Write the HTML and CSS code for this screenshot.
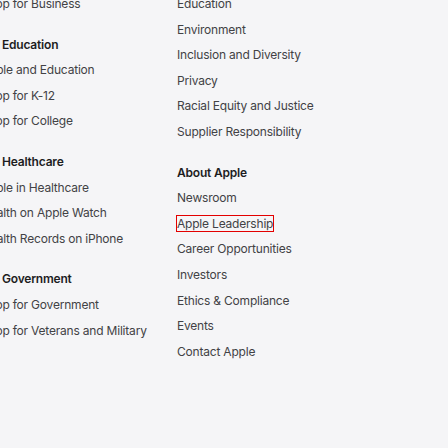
FILE: index.html
```html
<!DOCTYPE html>
<html lang="en">
<head>
<meta charset="utf-8">
<title>Apple Footer Directory</title>
<link rel="stylesheet" href="styles.css">
</head>
<body>
<nav class="directory">
  <div class="column">
    <section class="section">
      <ul class="list">
        <li class="item"><a class="link" href="#">Shop for Business</a></li>
      </ul>
    </section>
    <section class="section">
      <h3 class="title">For Education</h3>
      <ul class="list">
        <li class="item"><a class="link" href="#">Apple and Education</a></li>
        <li class="item"><a class="link" href="#">Shop for K-12</a></li>
        <li class="item"><a class="link" href="#">Shop for College</a></li>
      </ul>
    </section>
    <section class="section">
      <h3 class="title">For Healthcare</h3>
      <ul class="list">
        <li class="item"><a class="link" href="#">Apple in Healthcare</a></li>
        <li class="item"><a class="link" href="#">Health on Apple Watch</a></li>
        <li class="item"><a class="link" href="#">Health Records on iPhone</a></li>
      </ul>
    </section>
    <section class="section">
      <h3 class="title">For Government</h3>
      <ul class="list">
        <li class="item"><a class="link" href="#">Shop for Government</a></li>
        <li class="item"><a class="link" href="#">Shop for Veterans and Military</a></li>
      </ul>
    </section>
  </div>
  <div class="column">
    <section class="section">
      <ul class="list">
        <li class="item"><a class="link" href="#">Education</a></li>
        <li class="item"><a class="link" href="#">Environment</a></li>
        <li class="item"><a class="link" href="#">Inclusion and Diversity</a></li>
        <li class="item"><a class="link" href="#">Privacy</a></li>
        <li class="item"><a class="link" href="#">Racial Equity and Justice</a></li>
        <li class="item"><a class="link" href="#">Supplier Responsibility</a></li>
      </ul>
    </section>
    <section class="section">
      <h3 class="title">About Apple</h3>
      <ul class="list">
        <li class="item"><a class="link" href="#">Newsroom</a></li>
        <li class="item"><a class="link focused" href="#">Apple Leadership</a></li>
        <li class="item"><a class="link" href="#">Career Opportunities</a></li>
        <li class="item"><a class="link" href="#">Investors</a></li>
        <li class="item"><a class="link" href="#">Ethics &amp; Compliance</a></li>
        <li class="item"><a class="link" href="#">Events</a></li>
        <li class="item"><a class="link" href="#">Contact Apple</a></li>
      </ul>
    </section>
  </div>
</nav>
</body>
</html>
```

FILE: styles.css
```css
html, body {
  margin: 0;
  padding: 0;
  background: #f5f5f7;
  height: 100%;
  overflow: hidden;
}

body {
  font-family: Inter, "Noto Sans", "Liberation Sans", sans-serif;
  font-size: 12px;
  line-height: 16px;
  letter-spacing: -0.2px;
  color: #424245;
}

.directory {
  display: grid;
  grid-template-columns: 196px 200px;
  margin-top: -4px;
  margin-left: -19px;
}

.section {
  padding-bottom: 15px;
}

.title {
  margin: 0 0 9.6px;
  font-size: 12px;
  line-height: 16px;
  font-weight: 600;
  color: #1d1d1f;
}

.list {
  list-style: none;
  margin: 0;
  padding: 0;
}

.item {
  margin: 0 0 9.6px;
  white-space: nowrap;
}

.link {
  color: #424245;
  text-decoration: none;
}

.focused {
  outline: 1px solid #e30000;
  outline-offset: 0;
}
```
